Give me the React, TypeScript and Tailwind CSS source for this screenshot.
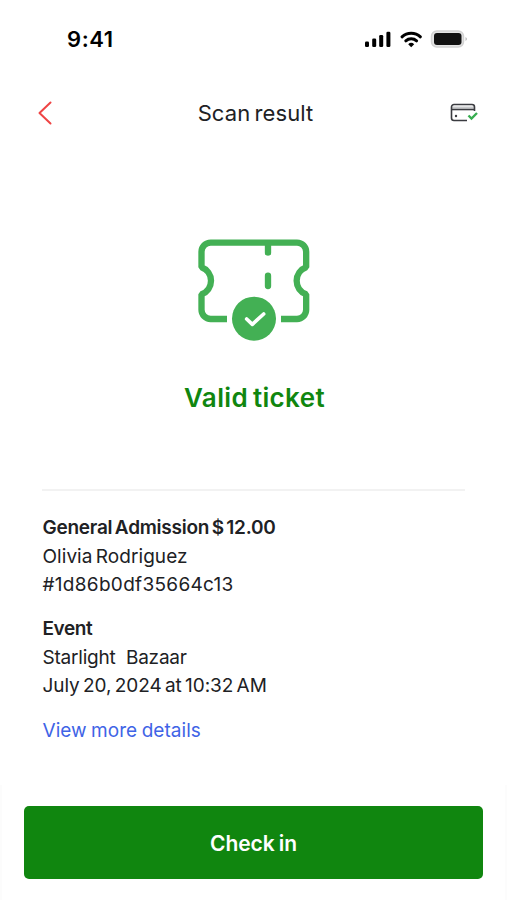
import type { ReactNode } from 'react';

// ---------------------------------------------------------------------------
// ScanResultPage — ticket scan outcome with check-in action
// ---------------------------------------------------------------------------

const ticket = {
  title: 'General Admission $ 12.00',
  holder: 'Olivia Rodriguez',
  code: '#1d86b0df35664c13',
  event: 'Starlight  Bazaar',
  date: 'July 20, 2024 at 10:32 AM',
};

export default function App() {
  return (
    <div className="flex h-[900px] w-[507px] flex-col overflow-hidden bg-white font-['Inter','Liberation_Sans',sans-serif] text-[#202124]">
      <StatusBar />

      {/* --- Header --- */}
      <header className="flex h-[69px] items-center justify-between pr-[28px] pl-[36px]">
        <button aria-label="Back" className="w-[25px]">
          <BackIcon />
        </button>
        <h1 className="pt-px text-[22px] leading-none tracking-[0.1px] [word-spacing:-2px]">
          Scan result
        </h1>
        <button aria-label="Payment">
          <CardCheckIcon />
        </button>
      </header>

      {/* --- Result --- */}
      <section className="flex flex-col items-center pt-[78px] pl-[2px]">
        <TicketIcon />
        <h2 className="mt-[25px] text-[26px] leading-[36px] font-semibold tracking-[0.35px] text-[#10860f] [word-spacing:-2px]">
          Valid ticket
        </h2>
      </section>

      {/* --- Ticket details --- */}
      <section className="mx-[42px] mt-[73px] border-t-2 border-[#f2f2f2] pt-[23px] pl-[0.5px] text-[19px] leading-[28.6px]">
        <Line className="font-semibold tracking-[-0.25px] [word-spacing:-2px]">{ticket.title}</Line>
        <Line className="tracking-[0.05px] [word-spacing:-2px]">{ticket.holder}</Line>
        <Line className="tracking-[0.3px]">{ticket.code}</Line>
        <div className="mt-[15.5px]">
          <Line className="font-semibold tracking-[-0.4px]">Event</Line>
          <Line className="tracking-[-0.2px]">{ticket.event}</Line>
          <Line className="tracking-[-0.05px] [word-spacing:-2px]">{ticket.date}</Line>
        </div>
        <a href="#details" className="mt-[15.5px] block text-[#3f64e6]">
          <Line className="tracking-[0.05px] [word-spacing:-1px]">View more details</Line>
        </a>
      </section>

      {/* --- Action --- */}
      <footer className="mt-auto h-[115px] border-x-2 border-[#fcfcfc] px-[22px] pt-[21px]">
        <button className="flex h-[73px] w-full items-center justify-center rounded-[5px] bg-[#10860f] pt-[3px] text-[21px] font-semibold tracking-[-0.1px] text-white [word-spacing:-1px]">
          <span>Check in</span>
        </button>
      </footer>
    </div>
  );
}

// ---------------------------------------------------------------------------
// Sub-components
// ---------------------------------------------------------------------------

function Line({ className, children }: { className: string; children: ReactNode }) {
  return <p className={'whitespace-pre ' + className}>{children}</p>;
}

function StatusBar() {
  return (
    <div className="flex h-[78px] items-center justify-between pr-[39px] pl-[67px] text-black">
      <span className="text-[22px] leading-none font-semibold tracking-[0.6px]">9:41</span>
      <svg width="104" height="20" viewBox="0 0 104 20">
        <rect x="1" y="12.5" width="4" height="5.5" rx="1.3" />
        <rect x="8.2" y="9.5" width="4" height="8.5" rx="1.3" />
        <rect x="15.2" y="6" width="4" height="12" rx="1.3" />
        <rect x="22.4" y="2.8" width="4" height="15.2" rx="1.3" />
        <g fill="none" stroke="#000" strokeWidth="3" strokeLinecap="round">
          <path d="M38 7.8a13.4 13.4 0 0 1 18.4 0" />
          <path d="M41.8 11.8a8 8 0 0 1 10.8 0" />
        </g>
        <path d="M47.2 18.300l-3-3.100a4.400 4.400 0 0 1 6 0z" />
        <rect x="67.5" y="2" width="32" height="16" rx="5.3" fill="#e4e4e4" stroke="#d2d2d2" strokeWidth="1.5" />
        <rect x="70" y="4" width="27.5" height="12" rx="3" fill="#111" />
        <path d="M101.5 8q3 2 0 4z" fill="#bbb" />
      </svg>
    </div>
  );
}

function BackIcon() {
  return (
    <svg width="16" height="26" viewBox="0 0 16 26" fill="none" stroke="#ef4444" strokeWidth="2">
      <path d="M14.5 2.5L3.5 13l11 10.5" strokeLinecap="round" strokeLinejoin="round" />
    </svg>
  );
}

function CardCheckIcon() {
  return (
    <svg width="29" height="20" viewBox="0 0 29 20" fill="none" stroke="#3a3b40" strokeWidth="1.6">
      <path d="M2 4.5h23" stroke="#c9cacd" strokeWidth="2" />
      <path d="M24.500 8V4A2.500 2.500 0 0 0 22 1.500H4A2.500 2.500 0 0 0 1.500 4v11A2.500 2.500 0 0 0 4 17.500h13" />
      <path d="M2 6.500h22.500" />
      <circle cx="6" cy="13" r="1.2" fill="#3a3b40" stroke="none" />
      <path d="M18.500 12.500l3 3 5.500-5.500" stroke="#37ad50" strokeWidth="2.4" />
    </svg>
  );
}

function TicketIcon() {
  return (
    <svg width="150" height="130" viewBox="0 0 450 390" fill="none" stroke="#43b054" strokeWidth="19">
      <path
        d="M141 282H92a27.500 27.500 0 0 1-27.500-27.500V208a43 43 0 0 0 0-81V80.500A27.500 27.500 0 0 1 92 53h259a27.500 27.500 0 0 1 27.500 27.500V127a43 43 0 0 0 0 81v46.500A27.500 27.500 0 0 1 351 282h-48"
        strokeLinejoin="bevel"
      />
      <path d="M264 55v28M264 152v31" strokeLinecap="round" />
      <circle cx="222" cy="281" r="66" fill="#43b054" stroke="none" />
      <path d="M200 282l17 16 34-31" stroke="#fff" strokeWidth="11" strokeLinecap="round" strokeLinejoin="round" />
    </svg>
  );
}
